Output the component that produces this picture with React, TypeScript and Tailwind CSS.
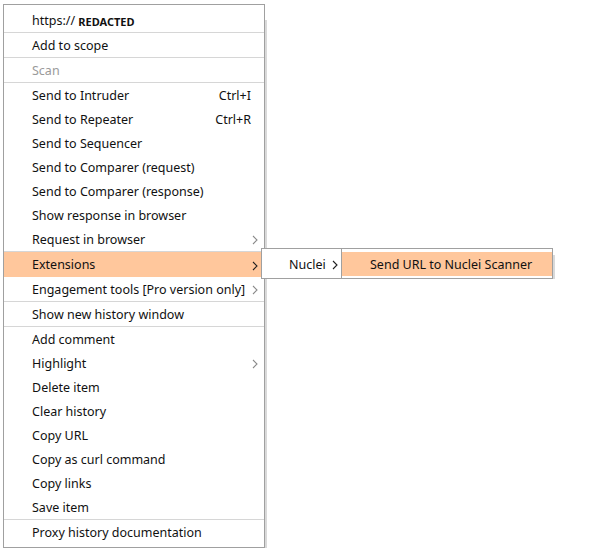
import React from "react";

type Item = {
  label: string;
  shortcut?: string;
  sub?: boolean;
  disabled?: boolean;
  active?: boolean;
};

// groups are separated by a thin rule
const groups: Item[][] = [
  [{ label: "Add to scope" }],
  [{ label: "Scan", disabled: true }],
  [
    { label: "Send to Intruder", shortcut: "Ctrl+I" },
    { label: "Send to Repeater", shortcut: "Ctrl+R" },
    { label: "Send to Sequencer" },
    { label: "Send to Comparer (request)" },
    { label: "Send to Comparer (response)" },
    { label: "Show response in browser" },
    { label: "Request in browser", sub: true },
  ],
  [
    { label: "Extensions", sub: true, active: true },
    { label: "Engagement tools [Pro version only]", sub: true },
  ],
  [{ label: "Show new history window" }],
  [
    { label: "Add comment" },
    { label: "Highlight", sub: true },
    { label: "Delete item" },
    { label: "Clear history" },
    { label: "Copy URL" },
    { label: "Copy as curl command" },
    { label: "Copy links" },
    { label: "Save item" },
  ],
  [{ label: "Proxy history documentation" }],
];

function Chevron({ dark }: { dark?: boolean }) {
  return (
    <svg width="6" height="10" viewBox="0 0 6 10" className="shrink-0">
      <polyline
        points="1,1 5,5 1,9"
        fill="none"
        stroke={dark ? "#202020" : "#8a8a8a"}
        strokeWidth="1.1"
      />
    </svg>
  );
}

function Row({ item }: { item: Item }) {
  return (
    <div
      className={`flex items-center pl-[28px] pt-[2px] ${item.active ? "h-[25px] bg-[#ffc79c]" : "h-[24px]"} ${
        item.sub ? "pr-[6px]" : "pr-[13px]"
      }`}
    >
      <span className={`flex-1 ${item.disabled ? "text-[#9a9a9a]" : "text-[#111]"}`}>
        {item.label}
      </span>
      {item.shortcut && <span className="text-[#111]">{item.shortcut}</span>}
      {item.sub && <Chevron dark={item.active} />}
    </div>
  );
}

export default function App() {
  return (
    <div
      className="relative h-[554px] w-[597px] bg-white pl-[3px] pt-[4px] text-[12.5px] leading-none"
      style={{ fontFamily: '"Noto Sans", "Open Sans", sans-serif' }}
    >
      {/* main context menu */}
      <div className="relative w-[262px] border border-[#a0a0a0] bg-white pb-[3px] pt-[3px]">
        <div className="flex h-[24px] items-center pl-[28px] pt-[2px] text-[#111]">
          https://&nbsp;
          <span className="text-[11px] font-bold">REDACTED</span>
        </div>
        {groups.map((g, i) => (
          <div key={i} className="border-t border-[#d6d6d6]">
            {g.map((it) => (
              <Row key={it.label} item={it} />
            ))}
          </div>
        ))}
        <div className="absolute -right-[3px] bottom-[-1px] top-[15px] w-[2px] bg-[#d9d9d9]" />
      </div>

      {/* Extensions > Nuclei submenu */}
      <div className="absolute left-[261px] top-[248px] w-[81px] border border-[#a0a0a0] bg-white pb-[2px] pt-[3px]">
        <div className="flex h-[24px] items-center gap-[6px] pl-[27px] pt-[2px] text-[#111]">
          Nuclei
          <Chevron dark />
        </div>
      </div>

      {/* Nuclei > action */}
      <div className="absolute left-[341px] top-[248px] w-[212px] border border-[#a0a0a0] bg-white pb-[2px] pt-[3px]">
        <div className="flex h-[24px] items-center bg-[#ffc79c] pl-[28px] pt-[2px] text-[#111]">
          Send URL to Nuclei Scanner
        </div>
        <div className="absolute -right-[3px] bottom-[-1px] top-[6px] w-[2px] bg-[#d9d9d9]" />
      </div>
    </div>
  );
}
